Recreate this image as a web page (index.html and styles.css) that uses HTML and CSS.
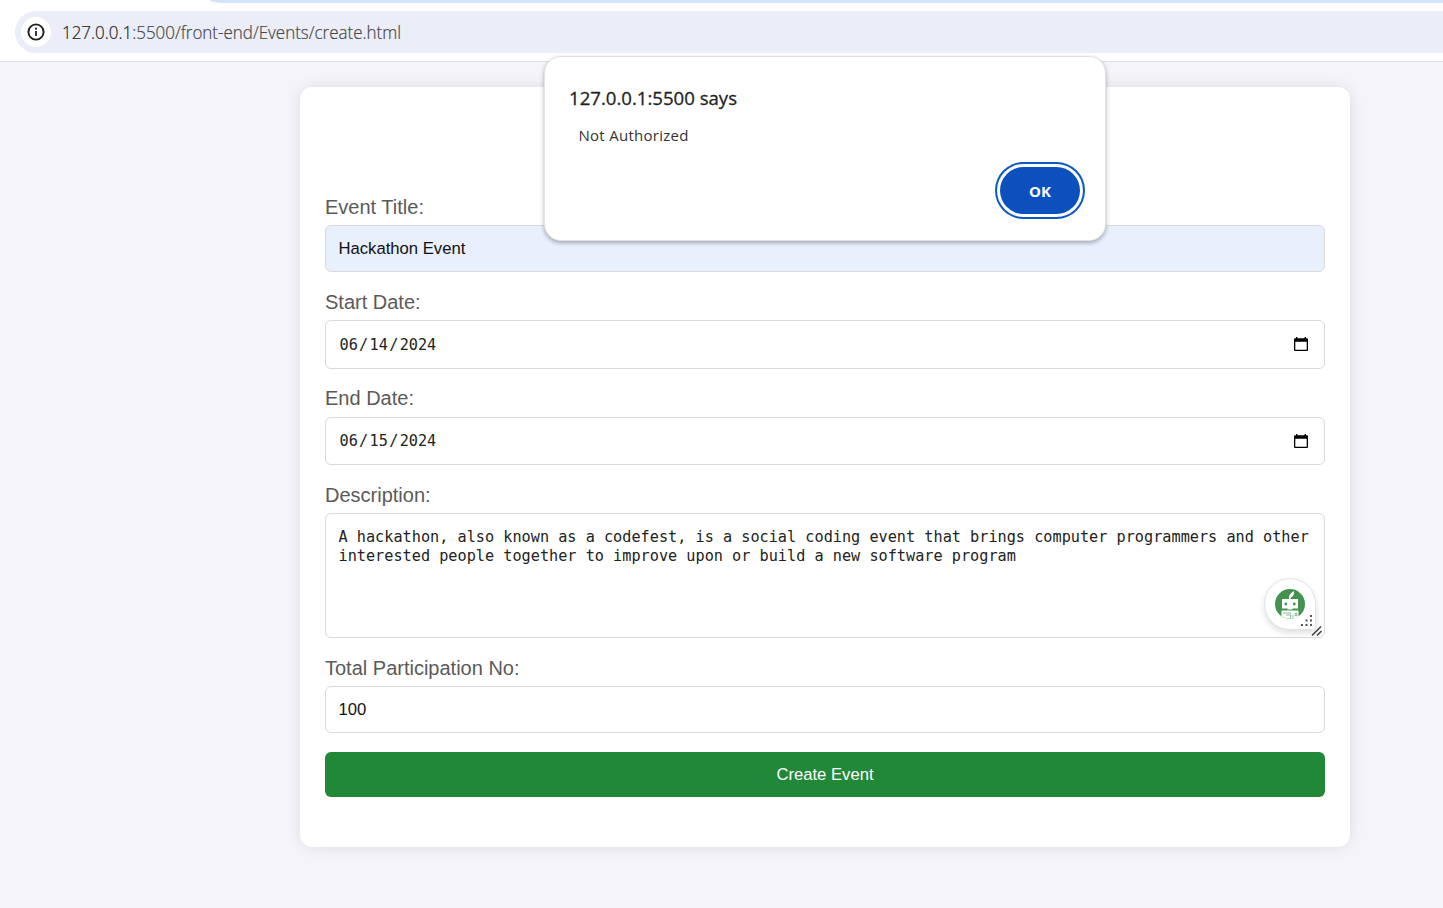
FILE: index.html
```html
<!DOCTYPE html>
<html lang="en">
<head>
<meta charset="utf-8">
<title>Create Event</title>
<link rel="stylesheet" href="styles.css">
</head>
<body>
<header class="toolbar">
  <div class="tab-edge"></div>
  <div class="address">
    <span class="info">
      <svg width="20" height="20" viewBox="0 0 20 20"><circle cx="10" cy="10" r="7.6" fill="none" stroke="#1f1f1f" stroke-width="1.9"/><path d="M10 9v5" stroke="#1f1f1f" stroke-width="1.8"/><circle cx="10" cy="6.7" r="1.1" fill="#1f1f1f"/></svg>
    </span>
    <svg class="url" width="380" height="36"><text x="1" y="25" textLength="339" lengthAdjust="spacingAndGlyphs"><tspan class="host">127.0.0.1</tspan>:5500/front-end/Events/create.html</text></svg>
  </div>
</header>
<main class="page">
  <form class="card">
    <label class="label" for="title">Event Title:</label>
    <input class="field autofilled" id="title" type="text" value="Hackathon Event">
    <span class="label">Start Date:</span>
    <div class="field date">
      <span class="date-value"><span>06</span><span class="slash">/</span><span>14</span><span class="slash">/</span><span>2024</span></span>
      <svg class="calendar" width="14" height="16" viewBox="0 0 14 16"><path fill-rule="evenodd" d="M2 1h1.400v1.300h7.200V1H12v1.300h1q1 0 1 1V14q0 1-1 1H1q-1 0-1-1V3.300q0-1 1-1h1zM1.300 5.700v8h11.400v-8z" fill="#000"/></svg>
    </div>
    <span class="label end-label">End Date:</span>
    <div class="field date end">
      <span class="date-value"><span>06</span><span class="slash">/</span><span>15</span><span class="slash">/</span><span>2024</span></span>
      <svg width="14" height="16" viewBox="0 0 14 16"><path fill-rule="evenodd" d="M2 1h1.400v1.300h7.200V1H12v1.300h1q1 0 1 1V14q0 1-1 1H1q-1 0-1-1V3.300q0-1 1-1h1zM1.300 5.700v8h11.400v-8z" fill="#000"/></svg>
    </div>
    <span class="label">Description:</span>
    <div class="field description">
      A hackathon, also known as a codefest, is a social coding event that brings computer programmers and other<br>interested people together to improve upon or build a new software program
      <div class="assistant">
        <svg width="50" height="50" viewBox="0 0 50 50">
          <circle cx="25" cy="25" r="15" fill="#43924f"/>
          <path d="M24 20q-.8-5 5-8 .8 4.500-3 6.500l-.7 1.500z" fill="#fff"/>
          <path d="M17 20h16v9.500H17z" fill="#fff"/>
          <circle cx="20.800" cy="25" r="1.400" fill="#43924f"/><circle cx="29.300" cy="25" r="1.400" fill="#43924f"/>
          <path d="M22.500 29h5v1.500h-5z" fill="#fff"/>
          <path d="M16.500 31.500h17v6q-8 4.500-17 0z" fill="#fff"/>
          <path d="M18 34h8m-5 2h4.500v3m2.500 0v-3m2-1.500h2v2h-2z" fill="none" stroke="#6cab75" stroke-width=".8"/>
        </svg>
        <svg class="dots" width="14" height="14" viewBox="0 0 14 14" fill="#555"><path d="M10 1h2v2h-2zM5.500 5.500h2v2h-2zM10 5.500h2v2h-2zM1 10h2v2H1zM5.500 10h2v2h-2zM10 10h2v2h-2z"/></svg>
      </div>
      <svg class="grip" width="12" height="12" viewBox="0 0 12 12"><path d="M1 10.500L10 1.500M6 10.500L10.500 6" stroke="#444" stroke-width="1.600"/></svg>
    </div>
    <label class="label" for="total">Total Participation No:</label>
    <input class="field" id="total" type="text" value="100">
    <button class="submit" type="button">Create Event</button>
  </form>
</main>
<section class="dialog" role="alertdialog">
  <svg class="dialog-text" width="300" height="90"><text class="heading" x="0" y="24" textLength="168" lengthAdjust="spacingAndGlyphs">127.0.0.1:5500 says</text><text class="message" x="9.500" y="60" textLength="110">Not Authorized</text></svg>
  <button class="ok" type="button">OK</button>
</section>
</body>
</html>
```
FILE: styles.css
```css
* { box-sizing: border-box; }
body {
  margin: 0;
  height: 908px;
  overflow: hidden;
  background: #f4f4fa;
  font-family: "Liberation Sans", Arial, sans-serif;
}
.toolbar {
  height: 62px;
  padding: 11px 0 0 15px;
  background: #fff;
  border-bottom: 1px solid #dfdfe3;
}
.tab-edge {
  position: absolute;
  left: 210px;
  right: 0;
  top: 0;
  height: 3px;
  background: #d3e3fd;
  border-bottom-left-radius: 12px 3px;
}
.address {
  display: flex;
  align-items: center;
  height: 42px;
  padding-left: 6px;
  background: #ebeef8;
  border-radius: 21px 0 0 21px;
}
.info {
  display: flex;
  align-items: center;
  justify-content: center;
  width: 30px;
  height: 30px;
  background: #fff;
  border-radius: 50%;
}
.url {
  margin-left: 10px;
  font: 300 17.5px "Open Sans", "Noto Sans", sans-serif;
  fill: #474747;
  stroke: #474747;
  stroke-width: .2px;
}
.host { fill: #1f1f1f; stroke: #1f1f1f; }
.page { padding: 25px 93px 0 300px; }
.card {
  display: flex;
  flex-direction: column;
  height: 760px;
  padding: 107px 25px 0;
  background: #fff;
  border-radius: 12px;
  box-shadow: 0 0 15px rgba(0, 0, 0, .1);
}
.label {
  height: 25px;
  margin-bottom: 6px;
  line-height: 26px;
  font-size: 20px;
  color: #5a5a5a;
}
.end-label { line-height: 24px; }
.field {
  flex: none;
  width: 100%;
  height: 47px;
  margin: 0 0 17px;
  padding: 0 12.5px;
  background: #fff;
  border: 1px solid #d9d9dc;
  border-radius: 6px;
  font: 16.67px "Liberation Sans", Arial, sans-serif;
  color: #111;
}
.autofilled { background: #e8effd; }
.date {
  display: flex;
  align-items: center;
  justify-content: space-between;
  height: 49px;
  padding-right: 16.5px;
  font: 15.2px "DejaVu Sans Mono", monospace;
  color: #222;
}
.calendar { margin-bottom: 1px; }
.end { height: 48px; }
.date-value { display: flex; padding-left: 1px; }
.slash { width: 11.8px; text-align: center; }
.description {
  position: relative;
  height: 125px;
  padding: 14px 12.5px;
  font: 15.2px/19px "DejaVu Sans Mono", monospace;
  letter-spacing: .01px;
  white-space: nowrap;
  color: #222;
}
.assistant {
  position: absolute;
  right: 8px;
  bottom: 7px;
  width: 52px;
  height: 52px;
  background: #fff;
  border: 1px solid #e3e4e9;
  border-radius: 26px 26px 3px 26px;
  box-shadow: 0 3px 6px rgba(0, 0, 0, .13);
}
.dots { position: absolute; right: 1px; bottom: 1px; }
.grip { position: absolute; right: 1px; bottom: 0; }
.submit {
  flex: none;
  height: 45px;
  margin: 2px 0 0;
  padding: 0;
  background: #218838;
  border: 0;
  border-radius: 6px;
  font: 16.67px "Liberation Sans", Arial, sans-serif;
  color: #fff;
}
.dialog {
  position: absolute;
  left: 544px;
  top: 56px;
  width: 562px;
  height: 185px;
  padding: 24px 26px;
  background: #fff;
  border: 1px solid #dfe3e1;
  border-radius: 17px;
  box-shadow: 0 2px 4px rgba(0, 0, 0, .3);
  display: flex;
  justify-content: space-between;
  align-items: flex-start;
}
.heading {
  font: 500 18.5px "Open Sans", "Noto Sans", sans-serif;
  fill: #1f1f1f;
  stroke: #1f1f1f;
  stroke-width: .3px;
}
.message { font: 400 15px "Open Sans", "Noto Sans", sans-serif; fill: #333; }
.dialog-text { margin-left: -2px; }
.ok {
  width: 80px;
  height: 47px;
  margin: 86px -1px 0 0;
  padding: 0;
  background: #0b50bd;
  border: 0;
  border-radius: 24px;
  box-shadow: 0 0 0 3px #fff, 0 0 0 5px #0b57c5;
  font: 700 15px "Open Sans", "Noto Sans", sans-serif;
  color: #fff;
}
```
